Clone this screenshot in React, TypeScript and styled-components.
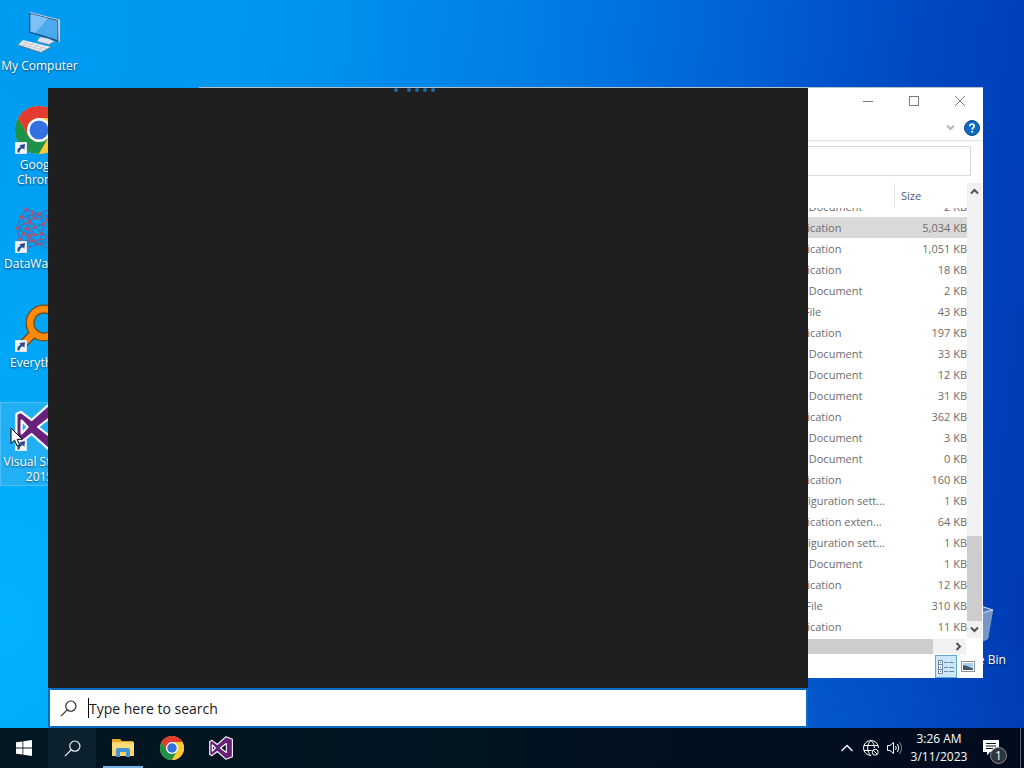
import React from 'react';
import styled, { createGlobalStyle, css } from 'styled-components';

const GlobalStyle = createGlobalStyle`
  * { box-sizing: border-box; }
  html, body, #root { height: 100%; }
  body {
    margin: 0;
    overflow: hidden;
    font-family: 'Open Sans', 'Noto Sans', sans-serif;
    font-size: 12px;
    line-height: 15px;
  }
  button, input { font: inherit; color: inherit; }
`;

const Screen = styled.div`
  display: flex;
  flex-direction: column;
  height: 100vh;
`;

const Desktop = styled.main`
  position: relative;
  flex: 1;
  min-height: 0;
  overflow: hidden;
  background:
    radial-gradient(ellipse 50% 75% at 0% 85%, rgba(0, 186, 255, 0.75), rgba(0, 186, 255, 0) 100%),
    radial-gradient(ellipse 25% 25% at 78% 100%, rgba(10, 100, 215, 0.5), rgba(10, 100, 215, 0) 100%),
    linear-gradient(97deg, #009cf0 0%, #0096f0 25%, #007ee6 48%, #0060d4 68%, #0048c2 83%, #003ab4 100%);
`;

const IconColumn = styled.nav`
  display: flex;
  flex-direction: column;
  gap: 15px;
  width: 79px;
  padding-top: 6px;
`;

const Shortcut = styled.button<{ $selected?: boolean }>`
  display: flex;
  flex-direction: column;
  align-items: center;
  gap: 3px;
  height: 84px;
  padding: 0;
  border: 1px solid transparent;
  background: none;
  color: #fff;
  text-align: center;
  text-shadow: 0 1px 2px rgba(0, 0, 0, 0.6);
  ${(p) =>
    p.$selected &&
    css`
      border-color: rgba(120, 205, 255, 0.5);
      background: rgba(110, 190, 240, 0.3);
    `}
`;

const ShortcutIcon = styled.span`
  position: relative;
  flex: none;
  width: 49px;
  height: 48px;
  svg { display: block; }
`;

const ArrowBadge = styled.svg`
  position: absolute;
  left: 0;
  bottom: 0;
`;

const RecycleBin = styled(Shortcut)`
  position: absolute;
  right: 10px;
  top: 600px;
  width: 79px;
`;

const Pointer = styled.svg`
  position: absolute;
  left: 10px;
  top: 427px;
  z-index: 5;
`;

/* File explorer window */
const Explorer = styled.section`
  position: absolute;
  top: 87px;
  right: 41px;
  bottom: 50px;
  left: 199px;
  display: flex;
  flex-direction: column;
  background: #fff;
  box-shadow: inset 0 1px #b4c0ca;
  color: #6d6d6d;
  font-size: 11px;
`;

const TitleBar = styled.header`
  display: flex;
  justify-content: flex-end;
  height: 28px;
`;

const WindowButton = styled.button`
  display: grid;
  place-items: center;
  width: 46px;
  padding: 0;
  border: 0;
  background: none;
  color: #7d7d7d;
`;

const RibbonBar = styled.div`
  display: flex;
  justify-content: flex-end;
  align-items: center;
  gap: 9px;
  height: 26px;
  padding-right: 3px;
  border-bottom: 1px solid #dfe0e1;
`;

const PlainButton = styled.button`
  display: grid;
  place-items: center;
  padding: 0;
  border: 0;
  background: none;
`;

const RibbonToggle = styled(PlainButton)`
  color: #b5b5b5;
`;

const AddressRow = styled.div`
  display: flex;
  padding: 5px 12px 7px;
`;

const AddressInput = styled.input`
  flex: 1;
  height: 30px;
  border: 1px solid #d9d9d9;
  background: #fff;
  outline: 0;
`;

const FilePane = styled.div`
  display: flex;
  flex: 1;
  min-height: 0;
`;

const FileTable = styled.table`
  display: flex;
  flex-direction: column;
  flex: 1;
  min-width: 0;
  overflow: hidden;
  thead { flex: none; }
  tbody {
    display: flex;
    flex: 1;
    flex-direction: column;
    justify-content: flex-end;
    min-height: 0;
    padding-bottom: 1px;
    overflow: hidden;
  }
`;

const FileRow = styled.tr<{ $selected?: boolean }>`
  display: grid;
  flex: none;
  grid-template-columns: 1fr 119px 72px;
  height: 21px;
  line-height: 21px;
  background: ${(p) => (p.$selected ? '#d9d9d9' : 'transparent')};
`;

const HeaderRow = styled.tr`
  display: grid;
  grid-template-columns: 1fr 119px 72px;
  height: 25px;
  line-height: 25px;
  color: #4c5a70;
`;

const HeaderCell = styled.th`
  padding: 0 6px;
  border-right: 1px solid #e5e5e5;
  font-weight: 400;
  text-align: left;
  &:last-child { border-right: 0; }
`;

const Cell = styled.td<{ $right?: boolean }>`
  padding: ${(p) => (p.$right ? '0' : '0 8px')};
  text-align: ${(p) => (p.$right ? 'right' : 'left')};
  white-space: nowrap;
`;

const VerticalScroll = styled.div`
  display: flex;
  flex-direction: column;
  width: 15px;
  margin-right: 1px;
  background: #f1f1f1;
`;

const VerticalThumb = styled.div`
  height: 85px;
  margin-top: auto;
  background: #cdcdcd;
`;

const ScrollButton = styled(PlainButton)`
  width: 15px;
  height: 17px;
  color: #505050;
`;

const HorizontalScroll = styled.div`
  display: flex;
  align-items: center;
  height: 15px;
  margin: 1px 17px 0 0;
  background: #f1f1f1;
`;

const HorizontalThumb = styled.div`
  flex: 1;
  align-self: stretch;
  margin-right: 18px;
  background: #cdcdcd;
`;

const StatusBar = styled.footer`
  display: flex;
  justify-content: flex-end;
  height: 24px;
  padding: 1px 4px 0 0;
`;

const ViewButton = styled(PlainButton)<{ $active?: boolean }>`
  width: 22px;
  height: 23px;
  border: 1px solid ${(p) => (p.$active ? '#5aa9d6' : 'transparent')};
  background: ${(p) => (p.$active ? '#cce8f8' : 'none')};
`;

/* Search flyout */
const SearchPanel = styled.section`
  position: absolute;
  top: 88px;
  bottom: 0;
  left: 48px;
  display: flex;
  flex-direction: column;
  width: 760px;
  background: #1f1f1f;
`;

const ProgressDots = styled.div`
  display: flex;
  flex: 1;
  gap: 4px;
  padding: 0 0 0 346px;
`;

const Dot = styled.i<{ $lead?: boolean }>`
  width: 4px;
  height: 4px;
  margin-right: ${(p) => (p.$lead ? '5px' : '0')};
  border-radius: 2px;
  background: #1f6da6;
`;

const SearchField = styled.label`
  display: flex;
  align-items: center;
  height: 40px;
  padding: 0 8px 0 10px;
  border: 2px solid #0a6fc2;
  background: #fff;
  color: #111;
`;

const Caret = styled.span`
  width: 1px;
  height: 20px;
  margin-left: 11px;
  background: #000;
`;

const SearchInput = styled.input`
  flex: 1;
  min-width: 0;
  padding: 1px 0 0;
  border: 0;
  outline: 0;
  background: none;
  font-size: 14px;
  line-height: 20px;
  &::placeholder { color: #1a1a1a; opacity: 1; }
`;

/* Taskbar */
const Taskbar = styled.footer`
  display: flex;
  flex: none;
  height: 40px;
  background: linear-gradient(90deg, #021722 0%, #021320 50%, #010b1e 100%);
  color: #fff;
`;

const TaskButton = styled.button<{ $lit?: boolean; $running?: boolean }>`
  position: relative;
  display: grid;
  place-items: center;
  width: 48px;
  padding: 0;
  border: 0;
  background: ${(p) => (p.$lit ? '#0b212d' : 'none')};
  ${(p) =>
    p.$running &&
    css`
      &::after {
        content: '';
        position: absolute;
        right: 4px;
        bottom: 0;
        left: 4px;
        height: 2px;
        background: #76b0e6;
      }
    `}
`;

const PinnedApps = styled.div`
  display: flex;
  gap: 1px;
  padding-left: 3px;
`;

const Tray = styled.div`
  display: flex;
  align-items: stretch;
  margin-left: auto;
`;

const TrayButton = styled(PlainButton)`
  width: 24px;
`;

const Clock = styled.button`
  width: 64px;
  padding: 2px 0;
  border: 0;
  background: none;
  line-height: 18px;
  text-align: center;
`;

const ActionCenter = styled(PlainButton)`
  position: relative;
  width: 49px;
  padding-right: 9px;
`;

const CountBadge = styled.span`
  position: absolute;
  right: 13px;
  bottom: 4px;
  width: 17px;
  height: 17px;
  border: 1px solid #8b8f96;
  border-radius: 50%;
  background: #30343c;
  font-size: 12px;
  line-height: 15px;
`;

const ShowDesktop = styled.button`
  width: 4px;
  padding: 0;
  border: 0;
  border-left: 1px solid #5b6472;
  background: none;
`;

const ShortcutArrow = () => (
  <ArrowBadge width="12" height="12" viewBox="0 0 12 12">
    <rect width="12" height="12" fill="#f4f6fa" stroke="#c9d3e0" strokeWidth="1" />
    <path d="M2.500 10.500C2 7.500 3.200 5.600 5.600 5L4.400 3.200L10 2L9.400 7.800L7.800 6.300C5.700 7 4.600 8 4.600 10.500Z" fill="#27498f" />
  </ArrowBadge>
);

const ComputerIcon = () => (
  <svg width="48" height="48" viewBox="0 0 48 48">
    <path d="M14 5L44 12.500V35L14 25.500Z" fill="#1c4f7c" />
    <path d="M43 12.200L45 13V34.500L43.500 35.500Z" fill="#c8d3da" />
    <path d="M14.500 5.300L44.500 13" stroke="#c8d8e4" strokeWidth="1" />
    <path d="M15.500 7L42.500 13.700V33L15.500 24.500Z" fill="#4ba9ee" />
    <path d="M15.500 7L33 11.300L20 26L15.500 24.500Z" fill="#7cc2f6" />
    <path d="M25 30L33 31.500L39.500 34.500L34 37.500L22 34.500Z" fill="#d8e1e8" />
    <path d="M22 34.500L34 37.500L39.500 34.500" fill="none" stroke="#7c93a4" />
    <path d="M8 33L36 40L26 45.500L3 38Z" fill="#eef1f3" />
    <path d="M3 38L26 45.500L36 40" fill="none" stroke="#6b7d88" />
    <path d="M5 36.500L29 43.500M7 34.500L32 42M13 34.500L8 39M18 36L13 41M24 37.500L18 42.500M30 39L23 44" stroke="#b4bfc7" strokeWidth="0.8" />
  </svg>
);

const ChromeIcon = ({ size }: { size: number }) => (
  <svg width={size} height={size} viewBox="0 0 48 48">
    <circle cx="24" cy="24" r="24" fill="#fcc934" />
    <path d="M13.600 30L3.200 12A24 24 0 0 0 24 48L34.400 30Z" fill="#1e9248" />
    <path d="M24 24L13.600 30L3.200 12A24 24 0 0 1 44.800 12L24 12Z" fill="#e33b2e" />
    <path d="M24 12H44.800A24 24 0 0 1 24 48L34.400 30Z" fill="#fcc934" />
    <circle cx="24" cy="24" r="12" fill="#fff" />
    <circle cx="24" cy="24" r="9.500" fill="#3272e0" />
  </svg>
);

const WebIcon = () => (
  <svg width="48" height="48" viewBox="0 0 48 48" fill="none">
    <g stroke="#5263a3" strokeWidth="1">
      <path d="M11 4L24 9L35 4L43 13L46 24L42 36L34 44L24 39L12 43L5 34L2 23L6 12Z" />
      <path d="M6 12L24 9L43 13L36 24L42 36L24 39L5 34L12 24ZM11 4L15 16L2 23L14 31L12 43M35 4L32 15L46 24L33 32L34 44" />
      <path d="M15 16L24 9L32 15L36 24L33 32L24 39L14 31L12 24ZM2 23L12 24M36 24L46 24M15 16L20 22L14 31M24 9L28 19L36 24M24 39L27 29L33 32M20 22L28 19L27 29Z" />
    </g>
    <path d="M6 12L15 16L20 22L12 24M14 31L20 30L27 29M28 19L32 15M12 24L20 30M17 7L19 13L27 14M8 29L17 36L28 34M9 18L17 19" stroke="#b05374" />
    <g fill="#bd4f69">
      {[[11, 4], [24, 9], [35, 4], [6, 12], [43, 13], [15, 16], [32, 15], [2, 23], [12, 24], [20, 22], [28, 19], [36, 24], [5, 34], [14, 31], [27, 29], [33, 32], [42, 36], [12, 43], [24, 39], [34, 44], [20, 30], [17, 7], [19, 13], [8, 29], [17, 36]].map(([x, y]) => (
        <circle key={`${x}-${y}`} cx={x} cy={y} r="1.700" />
      ))}
    </g>
  </svg>
);

const MagnifierIcon = () => (
  <svg width="48" height="48" viewBox="0 0 48 48" fill="none" strokeLinecap="round">
    <circle cx="29" cy="19" r="14" stroke="#6b4a1c" strokeWidth="9" />
    <path d="M18 30L6 42" stroke="#6b4a1c" strokeWidth="9" />
    <circle cx="29" cy="19" r="14" stroke="#ff8a0a" strokeWidth="6.500" />
    <path d="M18 30L6 42" stroke="#ff8a0a" strokeWidth="6.500" />
  </svg>
);

const StudioIcon = ({ size }: { size: number }) => (
  <svg width={size} height={size} viewBox="0 0 24 24">
    <path
      d="M17 0.700L23.400 3.200V20.800L17 23.300L8.300 15.500L3 19.600L0.700 18.500V5.500L3 4.400L8.300 8.500ZM3.300 8.800V15.200L6.300 12ZM17.300 7.500L11.500 12L17.300 16.500Z"
      fill="#68217a"
      fillRule="evenodd"
      stroke="#fff"
      strokeWidth="1.100"
      strokeLinejoin="round"
    />
  </svg>
);

const BinIcon = () => (
  <svg width="48" height="48" viewBox="0 0 48 48">
    <path d="M7 8L28 4L43 9L38 38L27 43L12 38Z" fill="#8fa9cf" />
    <path d="M28 12L43 9L38 38L27 43Z" fill="#7897c6" />
    <path d="M7 8L28 4L43 9L28 13Z" fill="#4b78bf" stroke="#cddcf0" />
  </svg>
);

const SearchGlyph = ({ stroke }: { stroke: string }) => (
  <svg width="17" height="17" viewBox="0 0 18 18" fill="none" stroke={stroke} strokeWidth="1.200">
    <circle cx="11.500" cy="6.500" r="5.400" />
    <path d="M7.600 10.400L1 17" />
  </svg>
);

const FolderIcon = () => (
  <svg width="22" height="20" viewBox="0 0 22 20">
    <path d="M0 1H8L10 3H21V6H0Z" fill="#e5a522" />
    <path d="M0 4H22V18H0Z" fill="#fbd568" />
    <path d="M0 6H22V11H0Z" fill="#fde08a" opacity="0.600" />
    <path d="M4 19V12Q4 10 6 10H16Q18 10 18 12V19H14V14H8V19Z" fill="#4195d4" />
  </svg>
);

const Chevron = ({ d, w = 9, h = 9 }: { d: string; w?: number; h?: number }) => (
  <svg width={w} height={h} viewBox={`0 0 ${w} ${h}`} fill="none" stroke="currentColor" strokeWidth="2">
    <path d={d} />
  </svg>
);

type FileEntry = { type: string; size: string; selected?: boolean };

const files: FileEntry[] = [
  { type: 'Text Document', size: '2 KB' },
  { type: 'Application', size: '5,034 KB', selected: true },
  { type: 'Application', size: '1,051 KB' },
  { type: 'Application', size: '18 KB' },
  { type: 'Text Document', size: '2 KB' },
  { type: 'INF File', size: '43 KB' },
  { type: 'Application', size: '197 KB' },
  { type: 'Text Document', size: '33 KB' },
  { type: 'Text Document', size: '12 KB' },
  { type: 'XML Document', size: '31 KB' },
  { type: 'Application', size: '362 KB' },
  { type: 'Text Document', size: '3 KB' },
  { type: 'Text Document', size: '0 KB' },
  { type: 'Application', size: '160 KB' },
  { type: 'Configuration sett...', size: '1 KB' },
  { type: 'Application exten...', size: '64 KB' },
  { type: 'Configuration sett...', size: '1 KB' },
  { type: 'Text Document', size: '1 KB' },
  { type: 'Application', size: '12 KB' },
  { type: 'BIN File', size: '310 KB' },
  { type: 'Application', size: '11 KB' },
];

const ExplorerWindow = () => (
  <Explorer>
    <TitleBar>
      <WindowButton aria-label="Minimize">
        <svg width="10" height="10" stroke="currentColor"><path d="M0 5.500H10" /></svg>
      </WindowButton>
      <WindowButton aria-label="Maximize">
        <svg width="10" height="10" fill="none" stroke="currentColor"><rect x="0.500" y="0.500" width="9" height="9" /></svg>
      </WindowButton>
      <WindowButton aria-label="Close">
        <svg width="10" height="10" stroke="currentColor"><path d="M0 0L10 10M10 0L0 10" /></svg>
      </WindowButton>
    </TitleBar>
    <RibbonBar>
      <RibbonToggle aria-label="Expand ribbon">
        <Chevron d="M1 2.500L4.500 6L8 2.500" />
      </RibbonToggle>
      <PlainButton aria-label="Help">
        <svg width="16" height="16" viewBox="0 0 16 16">
          <circle cx="8" cy="8" r="7.500" fill="#0a6cc4" stroke="#0a4a8a" />
          <path d="M5.800 6.200C5.800 3.400 10.400 3.500 10.200 6.100C10.100 7.600 8.200 7.700 8.100 9.600" fill="none" stroke="#fff" strokeWidth="1.600" />
          <circle cx="8.100" cy="11.800" r="1" fill="#fff" />
        </svg>
      </PlainButton>
    </RibbonBar>
    <AddressRow>
      <AddressInput aria-label="Address" />
    </AddressRow>
    <FilePane>
      <FileTable>
        <thead>
          <HeaderRow>
            <HeaderCell aria-label="Name" />
            <HeaderCell aria-label="Type" />
            <HeaderCell>Size</HeaderCell>
          </HeaderRow>
        </thead>
        <tbody>
          {files.map((f, i) => (
            <FileRow key={i} $selected={f.selected}>
              <Cell />
              <Cell>{f.type}</Cell>
              <Cell $right>{f.size}</Cell>
            </FileRow>
          ))}
        </tbody>
      </FileTable>
      <VerticalScroll>
        <ScrollButton aria-label="Scroll up"><Chevron d="M1 6.500L4.500 3L8 6.500" /></ScrollButton>
        <VerticalThumb />
        <ScrollButton aria-label="Scroll down"><Chevron d="M1 2.500L4.500 6L8 2.500" /></ScrollButton>
      </VerticalScroll>
    </FilePane>
    <HorizontalScroll>
      <HorizontalThumb />
      <ScrollButton aria-label="Scroll right"><Chevron d="M2.500 1L6 4.500L2.500 8" /></ScrollButton>
    </HorizontalScroll>
    <StatusBar>
      <ViewButton $active aria-label="Details view">
        <svg width="16" height="14" viewBox="0 0 16 14" fill="none" stroke="#6f87a0">
          <path d="M0.500 0.500H4.500V13.500H0.500ZM0.500 4.500H4.500M0.500 9.500H4.500" fill="#fff" />
          <path d="M6 2.500H10M11 2.500H16M6 7.500H10M11 7.500H16M6 11.500H10M11 11.500H16" />
          <path d="M2 2.500H3M2 7.500H3M2 11.500H3" stroke="#336fa8" />
        </svg>
      </ViewButton>
      <ViewButton aria-label="Thumbnail view">
        <svg width="14" height="11" viewBox="0 0 14 11">
          <rect x="0.500" y="0.500" width="13" height="10" fill="#fff" stroke="#8a93a8" />
          <rect x="2" y="2" width="10" height="7" fill="#a9cdec" />
          <path d="M2 4L6 5L12 7.500V9H2Z" fill="#3d5a63" />
        </svg>
      </ViewButton>
    </StatusBar>
  </Explorer>
);

export default function App() {
  return (
    <Screen>
      <GlobalStyle />
      <Desktop>
        <IconColumn>
          <Shortcut><ShortcutIcon><ComputerIcon /></ShortcutIcon>My Computer</Shortcut>
          <Shortcut><ShortcutIcon><ChromeIcon size={48} /><ShortcutArrow /></ShortcutIcon>Google Chrome</Shortcut>
          <Shortcut><ShortcutIcon><WebIcon /><ShortcutArrow /></ShortcutIcon>DataWagons</Shortcut>
          <Shortcut><ShortcutIcon><MagnifierIcon /><ShortcutArrow /></ShortcutIcon>Everything</Shortcut>
          <Shortcut $selected><ShortcutIcon><StudioIcon size={48} /><ShortcutArrow /></ShortcutIcon>Visual Studio 2015</Shortcut>
        </IconColumn>
        <RecycleBin><ShortcutIcon><BinIcon /></ShortcutIcon>Recycle Bin</RecycleBin>
        <ExplorerWindow />
        <SearchPanel>
          <ProgressDots>
            <Dot $lead /><Dot /><Dot /><Dot /><Dot />
          </ProgressDots>
          <SearchField>
            <SearchGlyph stroke="#222" />
            <Caret />
            <SearchInput aria-label="Search" placeholder="Type here to search" />
          </SearchField>
        </SearchPanel>
        <Pointer width="14" height="21" viewBox="0 0 14 21">
          <path d="M1 1V16.500L4.600 13.200L7 19L9.600 17.900L7.200 12.300H12.300Z" fill="#fff" stroke="#000" />
        </Pointer>
      </Desktop>
      <Taskbar>
        <TaskButton aria-label="Start">
          <svg width="16" height="16" viewBox="0 0 16 16" fill="#fff">
            <path d="M0 2.300L6.500 1.400V7.600H0ZM7.300 1.300L16 0V7.600H7.300ZM0 8.400H6.500V14.600L0 13.700ZM7.300 8.400H16V16L7.300 14.700Z" />
          </svg>
        </TaskButton>
        <TaskButton $lit aria-label="Search"><SearchGlyph stroke="#fff" /></TaskButton>
        <PinnedApps>
          <TaskButton $running aria-label="File Explorer"><FolderIcon /></TaskButton>
          <TaskButton aria-label="Google Chrome"><ChromeIcon size={24} /></TaskButton>
          <TaskButton aria-label="Visual Studio"><StudioIcon size={24} /></TaskButton>
        </PinnedApps>
        <Tray>
          <TrayButton aria-label="Show hidden icons">
            <svg width="12" height="8" fill="none" stroke="#fff" strokeWidth="1.300"><path d="M0.500 7L6 1.500L11.500 7" /></svg>
          </TrayButton>
          <TrayButton aria-label="Network">
            <svg width="16" height="16" viewBox="0 0 16 16" fill="none" stroke="#fff">
              <path d="M8 15.500A7.500 7.500 0 1 1 15.500 8M1 5.500H15M1 10.500H8.500M8 0.500C3.500 4 3.500 12 8 15.500M8 0.500C10.300 2.500 11.400 5 11.300 8" />
              <circle cx="12.200" cy="12.200" r="3" />
              <path d="M10.200 10.200L14.200 14.200" />
            </svg>
          </TrayButton>
          <TrayButton aria-label="Volume">
            <svg width="16" height="14" viewBox="0 0 16 14" fill="none" stroke="#fff">
              <path d="M0.500 4.500H3L6.500 1.500V12.500L3 9.500H0.500ZM8.500 5Q10 7 8.500 9M10.500 3Q13 7 10.500 11" />
              <path d="M12.500 1Q16.500 7 12.500 13" stroke="#7a8290" />
            </svg>
          </TrayButton>
          <Clock>3:26 AM<br />3/11/2023</Clock>
          <ActionCenter aria-label="Notifications">
            <svg width="16" height="16" viewBox="0 0 16 16">
              <path d="M0 0H16V12H7L4 15.500V12H0Z" fill="#fff" />
              <path d="M3 3.500H13M3 6H13M3 8.500H10" stroke="#0a1526" />
            </svg>
            <CountBadge>1</CountBadge>
          </ActionCenter>
          <ShowDesktop aria-label="Show desktop" />
        </Tray>
      </Taskbar>
    </Screen>
  );
}
